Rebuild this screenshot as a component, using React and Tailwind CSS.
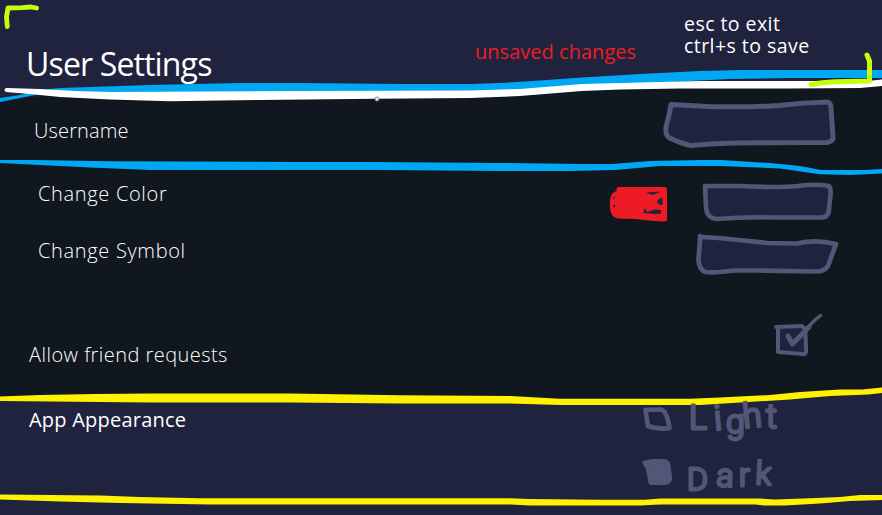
import React from "react";

const SLATE = "#525777";
const NAVY = "#1f233e";

function Divider({ children }) {
  return (
    <svg className="pointer-events-none absolute inset-0" width="882" height="515" viewBox="0 0 882 515" aria-hidden="true">
      {children}
    </svg>
  );
}

function Dividers() {
  return (
    <Divider>
      {/* header edge */}
      <path fill={NAVY} d="M0 84H882V80L780 83L640 85L470 94L260 98H110L60 95L0 99Z" />
      <path fill="#10171e" d="M560 89L640 84L882 84V90H560Z" />
      <path fill={NAVY} d="M680 77H882V82H680Z" />
      <path fill="#00a8f3" d="M0 98L20 95L40 90L60 88L150 85L240 83H300L400 84H470L500 83L540 80.500L582 77.500L640 74L700 71L740 70H882V78H790L730 79L690 81L640 84L580 87L480 93H110L40 94L20 98L0 102Z" />
      <path fill="#fff" d="M6 88Q3 90 6 92L30 94L60 97L110 99.500L170 101.300L260 100L375 98.700L470 98L520 96L582 91L620 89.500L680 88.500H790L860 88L882 86V79.500L868 81H700L640 82.500L582 84L520 89L470 90.500L300 91L110 92L75 91L40 89Z" />
      <circle cx="377" cy="99" r="2" fill="#e9ebf0" stroke="#858a9c" strokeWidth="1" />

      {/* profile rule */}
      <path fill="#00a8f3" d="M0 160H35L110 161.200L300 162H373L500 163L582 164H612L650 161L700 160H722L770 163L800 166L821 170H865L882 169V173.500L850 175L820 174.300L780 168.500L720 166H660L615 170L570 171H500L380 170H150L90 167.500L40 165L0 163Z" />

      {/* appearance section edges */}
      <path fill={NAVY} d="M0 399H560L700 402L882 391V410H0Z" />
      <path fill="#10171e" d="M0 390H882V388L700 401L560 401L0 398Z" />
      <path fill="#fff200" d="M0 396.500L40 395L95 394L150 393.400H290L400 395.200L510 396L560 398.800H690L720 397.500L770 395L800 392L840 389.500H862L882 387.500V393L868 394.500L830 396L790 399.500L740 402.500L700 405H560L510 403.500L400 403.500L290 402.500H150L100 402L0 401Z" />
      <path fill="#fff200" d="M0 494.500L100 495.600L140 497L200 498.300H290H510L530 499L600 499.700H645L660 498.500H760L775 499.500L810 498.300L840 497L860 495H882V500L850 501L820 503.500L785 505.500H765L755 504.500H660L640 505.500H530L510 504.500H210L120 503L60 501.500L0 499.500Z" />

      {/* window corners */}
      <path d="M7.300 26.500L6.500 17L8 8L22 7.700L31 7L36.500 8" fill="none" stroke="#c4ff0e" strokeWidth="4.800" strokeLinecap="round" strokeLinejoin="round" />
      <path d="M867 55L869.500 61V81L835 81.700L822 82.700L811 84.500" fill="none" stroke="#c4ff0e" strokeWidth="5" strokeLinecap="round" strokeLinejoin="round" />
    </Divider>
  );
}

function Sketch({ width, height, className, children }) {
  return (
    <svg width={width} height={height} viewBox={`0 0 ${width} ${height}`} className={className} fill="none" stroke={SLATE} strokeWidth="5" strokeLinecap="round" strokeLinejoin="round" aria-hidden="true">
      {children}
    </svg>
  );
}

function UsernameField() {
  return (
    <Sketch width={176} height={52} className="mt-[98px] mr-[44px]">
      <path fill={NAVY} d="M9 6.500L46 8.500Q90 9.500 117 7.500Q141 4.500 166 4Q169 5 169 10L171 39Q172 43 165 44.500L75 45Q55 45 29 47.500Q20 46 9 40.500Q3 39 4 29L7 17Z" />
    </Sketch>
  );
}

function ColorSwatch() {
  return (
    <Sketch width={64} height={42} className="mt-[4px] -mr-[3px] ml-px">
      <path fill="#ed1c24" stroke="#ed1c24" strokeWidth="5" d="M11 4.500H56.500V34L46 33.500Q27 31 10 31Q5 30 4.500 23V15Q5 9 11 8Z" />
      <path fill={NAVY} stroke="none" d="M38 7.500L53 6.500L48 8.500L45 10ZM50 14.500L54.500 12.500V20H52L49 17.500ZM37 23L39 27L47 24.500L53 25V28.500L48 29L35 28ZM5 13L7 11L6 15ZM5 21L7 19V23Z" />
    </Sketch>
  );
}

function ColorField() {
  return (
    <Sketch width={132} height={44} className="ml-[33px]">
      <path strokeWidth="4.600" fill={NAVY} d="M3 5L38 5Q74 7 96 5Q115 2.500 127 5Q129 6 128.500 14L127 28Q127 36.500 119 36.500H76Q45 35.500 14 38Q5 37 4 27Z" />
    </Sketch>
  );
}

function SymbolField() {
  return (
    <Sketch width={144} height={44} className="-mt-[6px]">
      <path strokeWidth="4.700" fill={NAVY} d="M6 5L23 6Q52 9 71 11L101 11.500Q120 7 140 12L132 34Q129 39 121 39.500L64 38.500L38 38.500Q20 41 9 40Q3 37 2.500 28L4 8L4 4" />
    </Sketch>
  );
}

function FriendToggle() {
  return (
    <Sketch width={52} height={46}>
      <path strokeWidth="4" fill={NAVY} d="M4 14L30 13Q34 15 33.500 22L34 34Q35 42 31 41L6 39L6 15" />
      <path strokeWidth="5" d="M16 23L20.500 31L37 14" />
      <path strokeWidth="3.500" d="M37 13L43 7L48.500 2.500" />
    </Sketch>
  );
}

function Row({ className, label, children }) {
  return (
    <div className={`flex justify-between text-[20px] leading-[26px] font-light tracking-[0.67px] text-white ${className}`}>
      <span className="whitespace-nowrap">{label}</span>
      {children}
    </div>
  );
}

function RadioOption({ selected, className, children }) {
  return (
    <div className={`flex items-start text-[#525777] ${className}`}>
      {selected ? (
        <Sketch width={34} height={30}>
          <path fill={SLATE} d="M4 4L15 2Q26 1 27 6L28.500 18Q29 23 24 23.500H10L7 8Z" />
        </Sketch>
      ) : (
        <Sketch width={34} height={30}>
          <path strokeWidth="4.700" d="M4.500 4L20 3.500Q26 5 28.500 22L26 22.500Q15 23 7 20Z" />
        </Sketch>
      )}
      {children}
    </div>
  );
}

function Handwritten({ className, children }) {
  return (
    <svg width="110" height="50" viewBox="0 0 110 50" className={`overflow-visible font-['Roboto',sans-serif] text-[32px] font-light ${className}`} fill={SLATE} stroke={SLATE} strokeWidth="2.800" strokeLinejoin="round" strokeLinecap="round">
      {children}
    </svg>
  );
}

export default function App() {
  return (
    <main className="relative isolate h-[515px] w-[882px] overflow-hidden bg-[#10171e] font-['Open_Sans','Noto_Sans',sans-serif] text-white">
      <div className="absolute inset-0 -z-10 flex flex-col">
        <div className="h-[85px] bg-[#1f233e]" />
        <div className="h-[315px]" />
        <div className="h-[115px] bg-[#1f233e]" />
      </div>
      <Dividers />

      <div className="relative flex h-full flex-col">
        <header className="flex h-[90px] shrink-0 items-start">
          <h1 className="mt-[42px] ml-[26px] w-[449px] text-[32px] leading-[44px] tracking-[-0.85px]">User Settings</h1>
          <p className="mt-[39px] w-[209px] text-[20px] leading-[26px] tracking-[0.03px] text-[#ed1c24]">unsaved changes</p>
          <p className="mt-[13px] text-[19.500px] leading-[22px] tracking-[0.45px] whitespace-nowrap">
            esc to exit<br />ctrl+s to save
          </p>
        </header>

        <section className="flex h-[76px] shrink-0 items-start justify-between">
          <span className="mt-[28px] ml-[34px] text-[20px] leading-[26px] font-light tracking-[0.15px]">Username</span>
          <div className="-mt-[90px]"><UsernameField /></div>
        </section>

        <section className="flex h-[230px] shrink-0 flex-col">
          <Row className="h-[65px] pt-[15px] pr-[48px] pl-[38px]" label="Change Color">
            <div className="flex"><ColorSwatch /><ColorField /></div>
          </Row>
          <Row className="h-[78px] pt-[7px] pr-[42px] pl-[38px]" label="Change Symbol">
            <SymbolField />
          </Row>
          <div className="flex items-start justify-between pr-[58px] pl-[29px]">
            <span className="mt-[33px] text-[20px] leading-[26px] font-light tracking-[0.45px]">Allow friend requests</span>
            <div className="mt-[4px]"><FriendToggle /></div>
          </div>
        </section>

        <section className="flex h-[119px] shrink-0 justify-between pl-[29px]">
          <h2 className="mt-[11px] text-[20px] leading-[26px] tracking-[0.22px]">App Appearance</h2>
          <div className="flex w-[241px] flex-col">
            <RadioOption className="h-[53px] pt-[10px]">
              <Handwritten className="-mt-[2px] ml-[13px]">
                <text x="1 27 38 56 78" y="25 26 29 24 24" rotate="0 -5 0 -6 0" className="text-[34px]">Light</text>
              </Handwritten>
            </RadioOption>
            <RadioOption selected className="h-[60px] pt-[10px]">
              <Handwritten className="ml-[13px]">
                <text x="-1 28 51 67" y="31 27 27 25" rotate="0 3 0 3" className="text-[32px]">Dark</text>
              </Handwritten>
            </RadioOption>
          </div>
        </section>
      </div>
    </main>
  );
}
